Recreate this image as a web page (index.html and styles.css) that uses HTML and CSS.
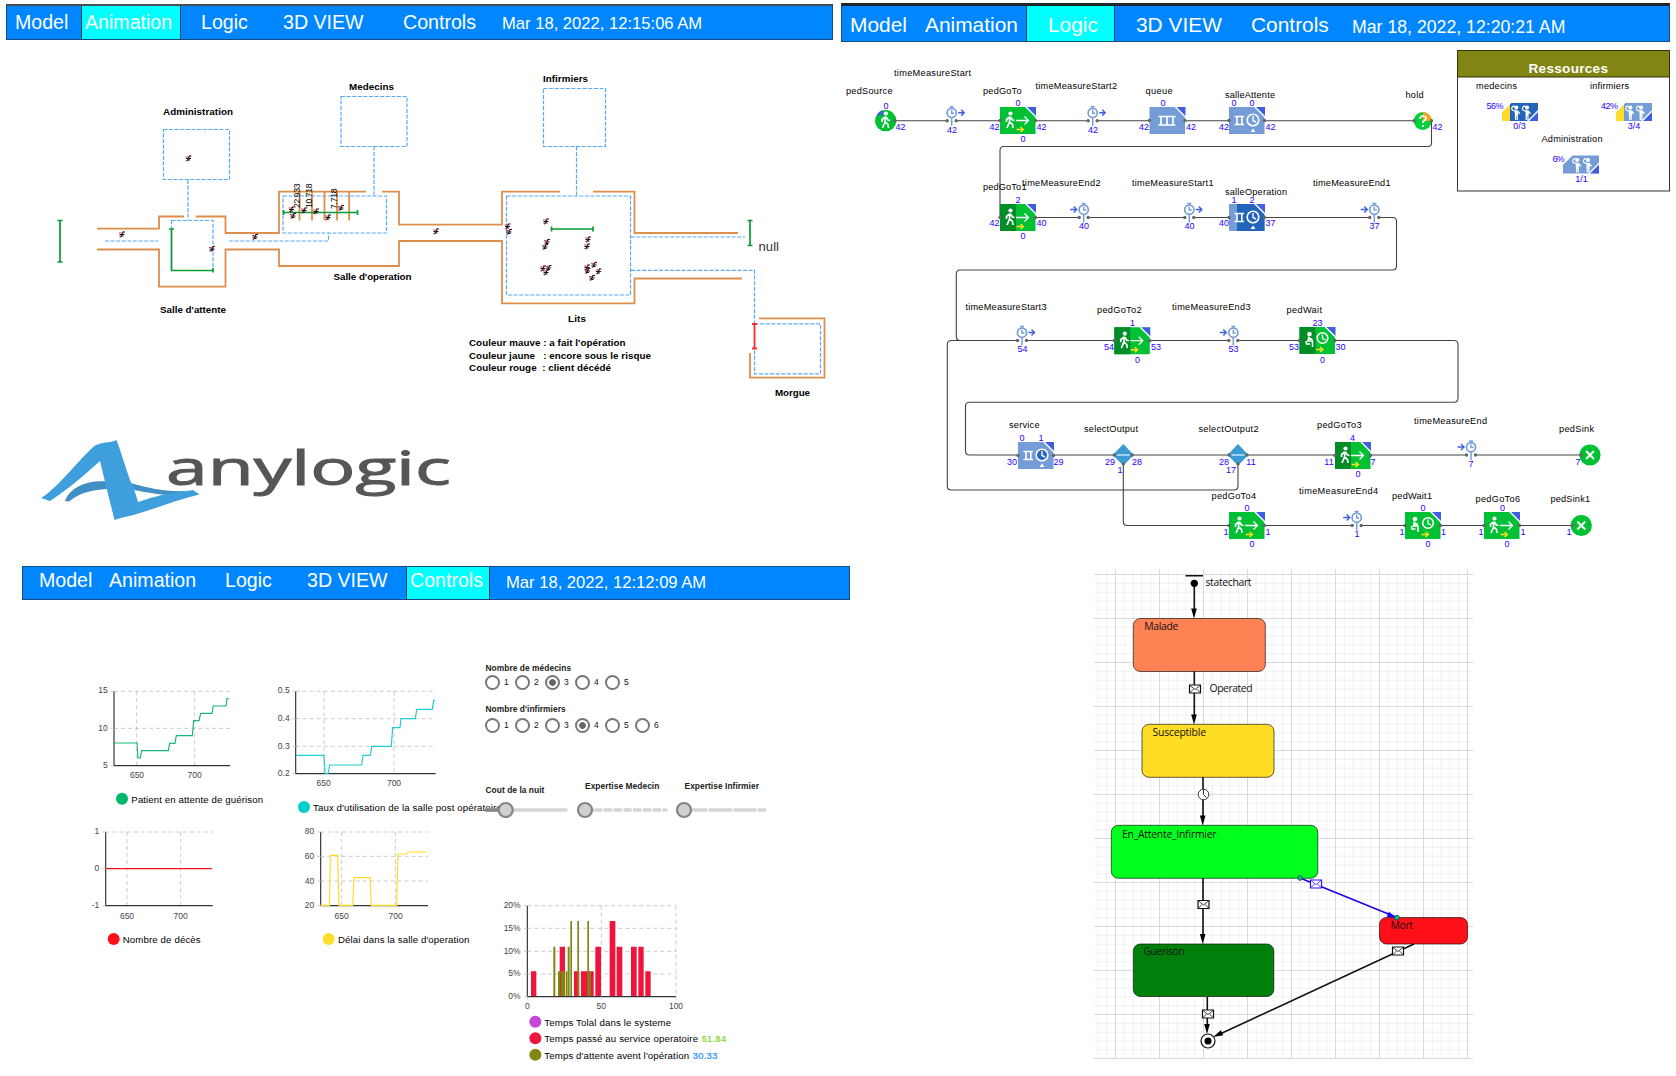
FILE: index.html
```html
<!DOCTYPE html>
<html lang="fr">
<head>
<meta charset="utf-8">
<title>Simulation hôpital</title>
<link rel="stylesheet" href="styles.css">
</head>
<body>
<main class="board">

<section class="panel">
<nav class="nav nav-animation">
<a class="tab">Model</a><a class="tab active">Animation</a><a class="tab">Logic</a><a class="tab">3D VIEW</a><a class="tab">Controls</a><span class="date">Mar 18, 2022, 12:15:06 AM</span>
</nav>
<svg class="canvas" width="838" height="520" viewBox="0 40 838 520">
<defs>
<g id="ped"><path d="M-2.500 0H2.500M-1.500 2.500L0 0L1-2.500H3M-1 1.500h2.500" stroke="#201418" stroke-width="1.200" fill="none"/><path d="M-3-1.500h2.500L1.500-3M-2.500 1.500l1 1.500" stroke="#b02a30" stroke-width=".8" fill="none"/></g>
</defs>
<g class="zone">
<rect x="163.500" y="129.500" width="66" height="50"/><path d="M188 180V220"/><rect x="171.500" y="220.500" width="41.500" height="50"/>
<path d="M105 241H158M229 241H328.500V233"/><rect x="283" y="196" width="103.500" height="37"/>
<rect x="341" y="96.500" width="66" height="50"/><path d="M374 146.500V196"/>
<rect x="543.500" y="88.500" width="62" height="58"/><path d="M576.500 146.500V196"/><rect x="506.500" y="196" width="124" height="99"/>
<path d="M631 237H745M631 270.300H754.500V323.500"/><rect x="754.500" y="323.800" width="66" height="50"/>
</g>
<path class="wall" d="M97 228.700H159V216.500H184M196 216.500H225.500V233H279V191.700H366M382 191.700H399V224.700H502V191.700H560M593 191.700H634.500V233H738M97 249.500H159V286.700H225.500V249.500H279V266H399V241H502V303.300H634.500V278.500H742M759 318.300H824.500V377.700H750V353"/>
<path class="wall" d="M299.500 192V220.500M312 192V220.500M324.500 192V220.500M337 192V220.500M349.200 192V220.500"/>
<path class="target" d="M60 220.500V262M57.500 220.500h5M57.500 262h5M171.500 229V270.500H213M169 229h5M213 268v4.500M283.500 212.500H357.500M283.500 210v5M357.500 210v5M551.500 229H593M551.500 226.500v5M593 226.500v5M750 220.500V245.500M747.500 220.500h5M747.500 245.500h5"/>
<path class="exit" d="M754.500 324V348.500M752 324h5M752 348.500h5"/>
<g class="tiny"><text transform="translate(299.800 208) rotate(-90)" textLength="24.500">22.933</text><text transform="translate(312 208) rotate(-90)" textLength="24.500">10.718</text><text transform="translate(337 209) rotate(-90)" textLength="20.500">7.718</text></g>
<g>
<use href="#ped" x="122" y="234.500"/><use href="#ped" x="188.500" y="158.500"/><use href="#ped" x="255" y="237"/><use href="#ped" x="212" y="249"/><use href="#ped" x="436" y="231.500"/>
<use href="#ped" x="291.500" y="209.500"/><use href="#ped" x="293" y="216"/><use href="#ped" x="304" y="210.500"/><use href="#ped" x="316" y="211.500"/><use href="#ped" x="328" y="217.500"/><use href="#ped" x="341" y="208"/>
<use href="#ped" x="546" y="221.500"/><use href="#ped" x="547" y="242"/><use href="#ped" x="545" y="247"/><use href="#ped" x="543" y="268.500"/><use href="#ped" x="548.500" y="268"/><use href="#ped" x="546" y="272.500"/>
<use href="#ped" x="588" y="239.500"/><use href="#ped" x="587" y="246.500"/><use href="#ped" x="587" y="267.500"/><use href="#ped" x="594" y="265"/><use href="#ped" x="587.500" y="271"/><use href="#ped" x="598.500" y="271.500"/><use href="#ped" x="592" y="278"/><use href="#ped" x="507.500" y="226.500"/><use href="#ped" x="509" y="232"/>
</g>
<g class="place">
<text x="163" y="115.300" textLength="70">Administration</text><text x="349" y="90.300" textLength="45">Medecins</text><text x="543" y="82" textLength="45">Infirmiers</text>
<text x="333.500" y="280" textLength="78">Salle d'operation</text><text x="160" y="313.300" textLength="66">Salle d'attente</text><text x="568" y="321.700" textLength="18">Lits</text><text x="775" y="396" textLength="35">Morgue</text>
<text x="469" y="346" textLength="156.500">Couleur mauve : a fait l'opération</text><text x="469" y="358.700" textLength="182">Couleur jaune   : encore sous le risque</text><text x="469" y="371" textLength="142">Couleur rouge  : client décédé</text>
</g>
<text class="null" x="758.500" y="251" textLength="20.500">null</text>
<path d="M65 501C70 487 88 480 106 481.500L107 489C90 490 80 493 69 501.500ZM131 483C148 488 165 492 186 491L178 495C165 496 150 493 134 490Z" fill="#418fc4"/>
<path d="M41 498C58 488 80 458 95 445.500C102 442 110 443 116.500 440C121 452 125 466 130 480C134 488 136 495 138 502C155 496 170 493 184 491.500L193 490L199.500 494.500C180 499 160 507 140 513C131 516 123 517 114.500 520L106 486L100 461C88 472 70 488 50 501Z" fill="#3f9fdd"/>
<text class="brand" x="166" y="484.500" textLength="285" lengthAdjust="spacingAndGlyphs">anylogic</text>
</svg>
</section>

<section class="panel">
<nav class="nav nav-logic">
<a class="tab">Model</a><a class="tab">Animation</a><a class="tab active">Logic</a><a class="tab">3D VIEW</a><a class="tab">Controls</a><span class="date">Mar 18, 2022, 12:20:21 AM</span>
</nav>
<svg class="canvas" width="838" height="518" viewBox="838 42 838 518">
<defs>
<g id="corner"><path d="M25 0L36 11V0Z" fill="#fff"/><path d="M27 0H36V9Z" fill="#3f5fe0"/></g>
<g id="ports"><circle cx="0" cy="13.500" r="1.700"/><circle cx="35.500" cy="13.500" r="1.700"/></g>
<g id="walker"><circle cx="10.500" cy="6.500" r="2.100" fill="#fff"/><path d="M10 9.500L9.500 15L7 21M9.500 14.500L12.500 17.500L13 21M9.500 10L6.500 12.500V15M10.500 10L12.500 13L14.500 13.500" stroke="#fff" stroke-width="1.700" fill="none"/></g>
<g id="yarrow"><path d="M16.500 22.500H22M20.500 20l3 2.500l-3 2.500" stroke="#ffe020" stroke-width="1.400" fill="none"/></g>
<g id="goIcon"><use href="#walker"/><path d="M16 13.500H28.500M24.500 9.500l4 4-4 4" stroke="#fff" stroke-width="1.300" fill="none"/><use href="#yarrow"/><use href="#corner"/><use href="#ports" fill="#666"/></g>
<g id="goto"><path d="M0 0H35.500V27H0Z" fill="#00c033"/><use href="#goIcon"/></g>
<g id="gotoBusy"><path d="M0 0H35.500V27H0Z" fill="#00c033"/><path d="M0 0H16V27H0Z" fill="#008c26"/><use href="#goIcon"/></g>
<g id="waitIcon"><circle cx="10" cy="7" r="2.300" fill="#fff"/><path d="M9.500 9.500L8.500 14H13V20M9.500 11L13 12.500M6.500 14L7 17H10.500" stroke="#fff" stroke-width="1.600" fill="none"/><circle cx="23" cy="11" r="5.300" fill="none" stroke="#fff" stroke-width="1.600"/><path d="M23 7.500V11.500L26 13" stroke="#fff" stroke-width="1.300" fill="none"/><use href="#yarrow"/><use href="#corner"/><use href="#ports" fill="#666"/></g>
<g id="wait"><path d="M0 0H35.500V27H0Z" fill="#00c033"/><use href="#waitIcon"/></g>
<g id="waitBusy"><path d="M0 0H35.500V27H0Z" fill="#00c033"/><path d="M0 0H16V27H0Z" fill="#008c26"/><use href="#waitIcon"/></g>
<g id="svcIcon"><path d="M5.500 9.500H15M5.500 17.500H15M8 9.500V17.500M12.800 9.500V17.500" stroke="#fff" stroke-width="1.600"/><circle cx="24" cy="13" r="5.800" stroke="#fff" stroke-width="1.600"/><path d="M24 9V13.500L27 15" stroke="#fff" stroke-width="1.400" fill="none"/><path d="M21.500 25l2.500-3.500l2.500 3.500Z" fill="#fff"/><use href="#corner"/><use href="#ports" fill="#666"/></g>
<g id="watch"><circle cy="-7.800" r="4.600" fill="#fff" stroke="#769fd9" stroke-width="1.700"/><path d="M-2-14H2M0-13V-11.500M0-3V5M0-10.500V-7.500H2.500" stroke="#769fd9" stroke-width="1.500" fill="none"/><circle cx="-4.500" r="1.700" fill="#666"/><circle cx="4.500" r="1.700" fill="#666"/></g>
<g id="start"><path d="M-4-1H4V1H-4Z" fill="#fff"/><use href="#watch"/><path d="M6.500-8H12.500M9.500-11l3 3-3 3" stroke="#3f5fe0" stroke-width="1.400" fill="none"/></g>
<g id="end"><path d="M-4-1H4V1H-4Z" fill="#fff"/><use href="#watch"/><path d="M-13.500-8H-7M-10-11l3 3-3 3" stroke="#3f5fe0" stroke-width="1.400" fill="none"/></g>
<g id="select"><path d="M0-11L10.500 0L0 10.500L-10.500 0Z" fill="#3b9ad2"/><path d="M-6.500 0H6.500" stroke="#d5f0ff" stroke-width="1.300"/><g fill="#666"><circle cx="-9" r="1.700"/><circle cx="9" r="1.700"/><circle cy="9" r="1.700"/></g></g>
<g id="sink"><circle r="10.600" fill="#00c033"/><path d="M-4-4L4 4M4-4L-4 4" stroke="#fff" stroke-width="1.900"/><circle cx="-9" r="1.700" fill="#666"/></g>
<g id="member"><circle cx="14.300" cy="4.600" r="2.100" fill="#fff"/><path d="M12.500 2.800Q9.200 3.500 9.800 6.300Q10.500 8.300 14.500 7.800" stroke="#fff" stroke-width="1.200" fill="none"/><path d="M12.700 7.500H16L18.300 10.500L17.500 11.300L15.900 10V17H14.700V13H14.200V17H13Z" fill="#fff"/></g>
<g id="crew"><path d="M9 0L0 9" stroke="#fff" stroke-width="1"/><path d="M36 7V18H25Z" fill="#fff"/><path d="M36 9V18H27Z" fill="#3f5fe0"/><use href="#member"/><use href="#member" x="10.700"/></g>
</defs>
<path class="wire" d="M895 120.700H1422M1431.500 121V143q0 3.500-3.500 3.500H1004q-4 0-4 4V217.500H1393q3.500 0 3.500 4V266q0 4-4 4H960q-3.700 0-3.700 4V336.500q0 4 4 4H1454q4 0 4 4V398.300q0 4-4 4H969.500q-4 0-4 4V451q0 4 4 4H1582M1123.300 465V521.500q0 4 4 4H1573M1238 465V486q0 4-4 4H951.300q-4 0-4-4V344.500q0-4 4-4H1018"/>
<g><circle cx="885.700" cy="120.700" r="10.600" fill="#00c033"/><path d="M876.500 115.500q2-4 6-5.500v5.500Z" fill="#3f5fe0"/><use href="#walker" x="875.500" y="107"/><circle cx="895" cy="120.700" r="1.700" fill="#666"/></g>
<use href="#start" x="951.700" y="120.700"/><use href="#goto" x="1000" y="107"/><use href="#start" x="1092.700" y="120.700"/>
<g transform="translate(1149.500 107)"><path d="M0 0H35.500V27H0Z" fill="#749dd8"/><path d="M9 9.500H26M9 18H26M11.500 9.500V18M17.500 9.500V18M23.500 9.500V18" stroke="#fff" stroke-width="1.700"/><use href="#corner"/><use href="#ports" fill="#666"/></g>
<g transform="translate(1229 107)"><path d="M0 0H35.500V27H0Z" fill="#749dd8"/><use href="#svcIcon" fill="none"/></g>
<g><circle cx="1422.700" cy="121" r="9" fill="#00d03a"/><path d="M1422.700 121V112A9 9 0 0 1 1431.700 121Z" fill="#f5a623"/><path d="M1420 119q0-3 3-3t3 2.500q0 1.500-3 3V123M1423 125v2" stroke="#fff" stroke-width="1.700" fill="none"/><circle cx="1414" cy="120.700" r="1.700" fill="#666"/><circle cx="1431.500" cy="120.700" r="1.700" fill="#666"/></g>
<use href="#gotoBusy" x="1000" y="204"/><use href="#end" x="1083.700" y="217.500"/><use href="#start" x="1189.300" y="217.500"/>
<g transform="translate(1229 204)"><path d="M0 0H35.500V27H0Z" fill="#749dd8"/><path d="M8 0H35.500V27H8Z" fill="#2365ba"/><use href="#svcIcon" fill="none"/></g>
<use href="#end" x="1374.300" y="217.500"/>
<use href="#start" x="1022" y="340.500"/><use href="#gotoBusy" x="1114.300" y="327.200"/><use href="#end" x="1233.300" y="340.500"/><use href="#waitBusy" x="1299.500" y="327"/>
<g transform="translate(1018 442)"><path d="M0 0H35.500V27H0Z" fill="#749dd8"/><use href="#svcIcon" fill="#2365ba"/></g>
<use href="#select" x="1123.300" y="455"/><use href="#select" x="1238" y="455"/><use href="#gotoBusy" x="1335" y="442"/><use href="#end" x="1471" y="455"/><use href="#sink" x="1590" y="455"/>
<use href="#goto" x="1229" y="512"/><use href="#end" x="1356.700" y="525.500"/><use href="#wait" x="1405" y="512"/><use href="#goto" x="1484" y="512"/><use href="#sink" x="1581.300" y="525.500"/>
<g class="label">
<text x="894" y="76" textLength="77">timeMeasureStart</text><text x="846" y="93.700" textLength="46.500">pedSource</text><text x="983" y="93.700" textLength="38.500">pedGoTo</text><text x="1035.500" y="89" textLength="81.500">timeMeasureStart2</text><text x="1145.500" y="93.700" textLength="27">queue</text><text x="1225" y="98" textLength="50">salleAttente</text><text x="1405.500" y="98" textLength="18">hold</text>
<text x="983" y="190" textLength="43.500">pedGoTo1</text><text x="1022" y="186.300" textLength="78.500">timeMeasureEnd2</text><text x="1132" y="186.300" textLength="81.500">timeMeasureStart1</text><text x="1225" y="195" textLength="62">salleOperation</text><text x="1313" y="186.300" textLength="77.500">timeMeasureEnd1</text>
<text x="965.500" y="309.700" textLength="81">timeMeasureStart3</text><text x="1097" y="313" textLength="44.500">pedGoTo2</text><text x="1172" y="309.700" textLength="78.500">timeMeasureEnd3</text><text x="1286.500" y="313" textLength="35.500">pedWait</text>
<text x="1009" y="428" textLength="30.500">service</text><text x="1084" y="432" textLength="54">selectOutput</text><text x="1198.500" y="432" textLength="60">selectOutput2</text><text x="1317" y="428" textLength="44.500">pedGoTo3</text><text x="1414" y="423.700" textLength="73">timeMeasureEnd</text><text x="1559" y="432" textLength="35">pedSink</text>
<text x="1211.500" y="499" textLength="44.500">pedGoTo4</text><text x="1299" y="494" textLength="79">timeMeasureEnd4</text><text x="1392" y="499" textLength="40">pedWait1</text><text x="1475.500" y="502.300" textLength="44.500">pedGoTo6</text><text x="1550.500" y="502.300" textLength="39.500">pedSink1</text>
</g>
<g class="count">
<text x="886" y="108.700">0</text><text x="900.500" y="130">42</text><text x="952" y="132.700">42</text><text x="994.500" y="130">42</text><text x="1018" y="106">0</text><text x="1041.500" y="130">42</text><text x="1023" y="142">0</text><text x="1093" y="132.700">42</text><text x="1144" y="130">42</text><text x="1163" y="106">0</text><text x="1191" y="130">42</text><text x="1224" y="130">42</text><text x="1234" y="106">0</text><text x="1252" y="106">0</text><text x="1270.500" y="130">42</text><text x="1437.500" y="130">42</text>
<text x="994.500" y="226">42</text><text x="1018" y="203">2</text><text x="1041.500" y="226">40</text><text x="1023" y="239">0</text><text x="1084" y="229">40</text><text x="1189.500" y="229">40</text><text x="1224" y="226">40</text><text x="1234" y="203">1</text><text x="1252" y="203">2</text><text x="1270.500" y="226">37</text><text x="1374.500" y="229">37</text>
<text x="1022.500" y="352">54</text><text x="1109" y="350">54</text><text x="1132.500" y="326">1</text><text x="1156" y="350">53</text><text x="1137.500" y="362.500">0</text><text x="1233.500" y="352">53</text><text x="1294" y="350">53</text><text x="1317.500" y="326">23</text><text x="1340.500" y="350">30</text><text x="1322.500" y="362.500">0</text>
<text x="1012" y="464.500">30</text><text x="1022" y="440.500">0</text><text x="1041" y="440.500">1</text><text x="1058.500" y="464.500">29</text><text x="1110" y="464.500">29</text><text x="1137" y="464.500">28</text><text x="1120" y="473">1</text><text x="1224" y="464.500">28</text><text x="1231" y="473">17</text><text x="1251" y="464.500">11</text><text x="1329" y="464.500">11</text><text x="1352.500" y="440.500">4</text><text x="1373" y="464.500">7</text><text x="1358" y="477">0</text><text x="1471" y="467">7</text><text x="1578" y="464.500">7</text>
<text x="1226" y="535">1</text><text x="1247" y="511">0</text><text x="1268" y="535">1</text><text x="1252" y="547">0</text><text x="1357" y="537">1</text><text x="1402" y="535">1</text><text x="1423" y="511">0</text><text x="1443.500" y="535">1</text><text x="1428" y="547">0</text><text x="1481" y="535">1</text><text x="1502.500" y="511">0</text><text x="1523" y="535">1</text><text x="1507" y="547">0</text><text x="1569" y="535">1</text>
</g>
<rect x="1457.500" y="50.500" width="212" height="140.500" fill="#fff" stroke="#333"/><rect x="1457.500" y="50.500" width="212" height="26.500" fill="#808611" stroke="#333311"/>
<text class="heading" x="1528.500" y="73" textLength="79.500">Ressources</text>
<g transform="translate(1502 103)"><path d="M9 0H36V18H0V9Z" fill="#2365ba"/><path d="M8 1V18H0V9Z" fill="#ffdc28"/><use href="#crew"/></g>
<g transform="translate(1616 103)"><path d="M9 0H36V18H0V9Z" fill="#749dd8"/><path d="M8 1V18H0V9Z" fill="#ffdc28"/><use href="#crew"/></g>
<g transform="translate(1563 155.500)"><path d="M9 0H36V18H0V9Z" fill="#749dd8"/><use href="#crew"/></g>
<g class="label"><text x="1476" y="89" textLength="41">medecins</text><text x="1590" y="89" textLength="39">infirmiers</text><text x="1541.500" y="142" textLength="61">Administration</text></g>
<g class="count"><text x="1495" y="109" textLength="17">56%</text><text x="1609.500" y="109" textLength="17">42%</text><text x="1558.500" y="162" textLength="12">6%</text><text x="1519.500" y="129">0/3</text><text x="1634" y="129">3/4</text><text x="1581.500" y="182">1/1</text></g>
</svg>
</section>

<section class="panel">
<nav class="nav nav-controls">
<a class="tab">Model</a><a class="tab">Animation</a><a class="tab">Logic</a><a class="tab">3D VIEW</a><a class="tab active">Controls</a><span class="date">Mar 18, 2022, 12:12:09 AM</span>
</nav>
<div class="dash">
<svg class="charts" width="460" height="475" viewBox="0 153 1380 1425">
<g>
<path class="grid" d="M342 421H690M342 532H690M410 421V644M584 421V644"/><path class="axis" d="M342 421V644H690"/><path class="tick" d="M332 421h10M332 532h10M332 644h10"/>
<path class="series" stroke="#16b777" d="M342 576H411L414 621H421L425 599H505L509 577H525L529 554H577L581 509H597L602 487H636L640 465H678L681 443H686"/>
<g class="num"><g text-anchor="end"><text x="323" y="427">15</text><text x="323" y="540">10</text><text x="323" y="651">5</text></g><g text-anchor="middle"><text x="411" y="680">650</text><text x="584" y="680">700</text></g></g>
<circle cx="366" cy="743" r="18" fill="#00b56c"/><text class="key" x="394" y="755" textLength="395">Patient en attente de guérison</text>
</g>
<g>
<path class="grid" d="M887 421H1307M887 503H1307M887 586H1307M972 421V668M1182 421V668"/><path class="axis" d="M887 421V668H1307"/><path class="tick" d="M877 421h10M877 503h10M877 586h10M877 668h10"/>
<path class="series" stroke="#1dd0cf" d="M887 613H972L975 667H985L989 642H1085L1089 613H1111L1115 586H1174L1178 530H1200L1203 503H1246L1250 475H1297L1301 448H1305"/>
<g class="num"><g text-anchor="end"><text x="869" y="427">0.5</text><text x="869" y="511">0.4</text><text x="869" y="594">0.3</text><text x="869" y="676">0.2</text></g><g text-anchor="middle"><text x="971" y="706">650</text><text x="1182" y="706">700</text></g></g>
<circle cx="912" cy="768" r="18" fill="#00d0cc"/><text class="key" x="939" y="780" textLength="566">Taux d'utilisation de la salle post opératoire</text>
</g>
<g>
<path class="grid" d="M317 843H638M381 843V1064M542 843V1064"/><path class="axis" d="M317 843V1064H638"/><path class="tick" d="M307 843h10M307 953h10M307 1064h10"/>
<path class="series" stroke="#ff1018" d="M317 953H636"/>
<g class="num"><g text-anchor="end"><text x="298" y="850">1</text><text x="298" y="960">0</text><text x="298" y="1071">-1</text></g><g text-anchor="middle"><text x="381" y="1103">650</text><text x="542" y="1103">700</text></g></g>
<circle cx="341" cy="1164" r="18" fill="#ff1018"/><text class="key" x="368" y="1176" textLength="234">Nombre de décès</text>
</g>
<g>
<path class="grid" d="M962 843H1284M962 916H1284M962 990H1284M1025 843V1064M1186 843V1064"/><path class="axis" d="M962 843V1064H1284"/><path class="tick" d="M952 843h10M952 916h10M952 990h10M952 1064h10"/>
<path class="series" stroke="#ffdc20" d="M962 1063H988L991 913H1013L1017 1063H1058L1062 980H1110L1114 1063H1190L1194 909H1219L1224 903H1281"/>
<g class="num"><g text-anchor="end"><text x="943" y="850">80</text><text x="943" y="924">60</text><text x="943" y="998">40</text><text x="943" y="1071">20</text></g><g text-anchor="middle"><text x="1025" y="1103">650</text><text x="1187" y="1103">700</text></g></g>
<circle cx="986" cy="1164" r="18" fill="#ffdc28"/><text class="key" x="1014" y="1176" textLength="394">Délai dans la salle d'operation</text>
</g>
</svg>
<div class="side">
<div class="settings">
<div class="caption">Nombre de médecins</div>
<div class="radios"><label><i></i>1</label><label><i></i>2</label><label><i class="on"></i>3</label><label><i></i>4</label><label><i></i>5</label></div>
<div class="caption second">Nombre d'infirmiers</div>
<div class="radios low"><label><i></i>1</label><label><i></i>2</label><label><i></i>3</label><label><i class="on"></i>4</label><label><i></i>5</label><label><i></i>6</label></div>
<div class="sliders">
<div class="slider"><div class="caption drop">Cout de la nuit</div><svg width="99" height="18" viewBox="0 0 99 18"><path class="track" d="M1.500 9H81"/><path class="track filled" d="M1.500 9H20"/><circle class="knob" cx="20.700" cy="9" r="7"/></svg></div>
<div class="slider"><div class="caption">Expertise Medecin</div><svg width="99" height="18" viewBox="0 0 99 18"><path class="track" d="M1.500 9H81"/><path class="gaps" d="M17 9h1.500M27 9h1.500M37 9h1.500M46.500 9h1.500M56.500 9h1.500M66 9h1.500M76 9h1.500"/><circle class="knob" cx="0" cy="9" r="7"/></svg></div>
<div class="slider"><div class="caption">Expertise Infirmier</div><svg width="99" height="18" viewBox="0 0 99 18"><path class="track" d="M1.500 9H81"/><path class="gaps" d="M23.500 9h1.500M48 9h1.500M72.500 9h1.500"/><circle class="knob" cx="0" cy="9" r="7"/></svg></div>
</div>
</div>
<svg class="hist" width="330" height="206" viewBox="0 0 990 618">
<path class="grid" d="M202 104H648M202 172H648M202 241H648M202 309H648M424 104V376M648 104V376"/>
<path fill="#f0143c" d="M213 301h16v76h-16ZM299 227h16v150h-16ZM342 301h16v76h-16ZM363 301h38v76h-38ZM406 227h17v150h-17ZM449 150h17v227h-17ZM470 227h17v150h-17ZM513 227h17v150h-17ZM535 227h16v150h-16ZM556 301h16v76h-16Z"/>
<path fill="#808611" d="M280 227h6v150h-6ZM294 301h6v76h-6ZM302 301h13v76h-13ZM317 301h5v76h-5ZM323 227h6v150h-6ZM331 150h5v227h-5ZM352 150h5v227h-5ZM382 150h5v227h-5ZM388 301h5v76h-5Z"/>
<path class="axis" d="M202 104V377H648"/><path class="tick" d="M192 104h10M192 172h10M192 241h10M192 309h10M192 377h10M202 377v9M424 377v9M648 377v9"/>
<g class="num"><g text-anchor="end"><text x="182" y="111">20%</text><text x="182" y="180">15%</text><text x="182" y="248">10%</text><text x="182" y="316">5%</text><text x="182" y="385">0%</text></g><g text-anchor="middle"><text x="202" y="414">0</text><text x="424" y="414">50</text><text x="648" y="414">100</text></g></g>
<circle cx="226" cy="452" r="18" fill="#c846d6"/><circle cx="226" cy="502" r="18" fill="#f0143c"/><circle cx="226" cy="551" r="18" fill="#808611"/>
<g class="key"><text x="253" y="464" textLength="380">Temps Tolal dans le systeme</text><text x="253" y="513" textLength="461">Temps passé au service operatoire</text><text x="253" y="563" textLength="434">Temps d'attente avent l'opération</text></g>
<text class="key strong" fill="#92d840" x="725" y="513" textLength="73">51.84</text><text class="key medium" fill="#1a90f5" x="698" y="563" textLength="74">30.33</text>
</svg>
</div>
</div>
</section>

<section class="panel chartpanel">
<svg class="statechart" width="379" height="491" viewBox="1094 569 379 491">
<defs>
<pattern id="mesh" x="1115" y="574" width="44" height="44" patternUnits="userSpaceOnUse"><path d="M9.300 0V44M18.100 0V44M26.900 0V44M35.700 0V44M0 9.300H44M0 18.100H44M0 26.900H44M0 35.700H44" stroke="#f0f0f0" stroke-width="1"/><path d="M.5 0V44M0 .5H44" stroke="#d9d9d9" stroke-width="1"/></pattern>
<g id="mail"><path d="M-5.500-4H5.500V4H-5.500Z" fill="#fff" stroke-width="1.200"/><path d="M-5-3.500L0 .5L5-3.500M-5 3.500L-1.500 0M5 3.500L1.500 0" fill="none" stroke-width=".8"/></g>
<path id="head" d="M-2.800-10H2.800L0 0Z"/>
</defs>
<rect x="1094" y="569" width="379" height="490" fill="url(#mesh)"/>
<g class="flow"><path d="M1185.500 575.700H1203M1194.300 583V612M1194.300 671V715M1203 777V816M1203 878V936M1207.300 997V1025M1414 944L1220 1034"/></g>
<circle cx="1194.300" cy="583.300" r="3.600"/>
<use href="#head" x="1194" y="618.500"/><use href="#head" x="1194" y="724.500"/><use href="#head" x="1202.700" y="825.500"/><use href="#head" x="1202.700" y="944"/><use href="#head" x="1207" y="1034"/><use href="#head" transform="translate(1213 1037) rotate(65)"/>
<g class="state">
<rect x="1133.300" y="618.500" width="132" height="53" rx="7" fill="#ff8254"/><rect x="1142" y="724.300" width="132" height="53" rx="7" fill="#ffdc24"/><rect x="1111.300" y="825.300" width="206.500" height="53" rx="7" fill="#00ff1c"/><rect x="1133.300" y="944" width="140.500" height="52.500" rx="7" fill="#00800a"/><rect x="1379.500" y="917.500" width="88" height="26.500" rx="7" fill="#ff1018"/>
</g>
<path d="M1300 878L1397 917.500" stroke="#2000e8" stroke-width="1.600"/><use href="#head" transform="translate(1397 918) rotate(-68)" fill="#2000ff"/>
<circle cx="1300" cy="878" r="2.300" fill="#00e020" stroke="#1040b0"/><circle cx="1397" cy="917.700" r="2.300" fill="#00e020" stroke="#1040b0"/>
<g stroke="#111"><use href="#mail" x="1195" y="689"/><use href="#mail" x="1203.500" y="904.500"/><use href="#mail" x="1208" y="1014"/><use href="#mail" x="1398" y="951"/></g><use href="#mail" x="1316" y="884" stroke="#3010f0"/>
<circle cx="1203.500" cy="794.500" r="5.300" fill="#fff" stroke="#333"/><path d="M1203.500 790V794.500L1206.500 797.500" stroke="#333" fill="none"/>
<circle cx="1208" cy="1041" r="7" fill="#fff" stroke="#111" stroke-width="1.200"/><circle cx="1208" cy="1041" r="3.500"/>
<g class="statename"><text x="1205.500" y="586.300" textLength="46">statechart</text><text x="1209.500" y="691.500" textLength="43">Operated</text><text x="1144.300" y="630" textLength="34">Malade</text><text x="1152.500" y="735.500" textLength="53.500">Susceptible</text><text x="1122" y="837.500" textLength="94.500">En_Attente_Infirmier</text><text x="1143.500" y="955" textLength="41">Guerison</text><text x="1390.500" y="929" textLength="22.500">Mort</text></g>
</svg>
</section>

</main>
</body>
</html>
```
FILE: styles.css
```css
* { box-sizing: border-box; }
body { margin: 0; background: #fff; font-family: "Liberation Sans", Arial, sans-serif; color: #111; }
.board { display: grid; grid-template-columns: 838px 838px; grid-template-rows: 560px 516px; width: 1676px; height: 1076px; overflow: hidden; }
.panel { min-width: 0; }
svg { display: block; overflow: visible; }

/* Navigation bars */
.nav { display: flex; background: #0087ff; border: 1px solid #174b7c; color: #fff; white-space: nowrap; font-size: 19.6px; line-height: 22px; }
.tab { flex: none; }
.date { font-size: 16.6px; }
.active { background: #0ff; border: solid #063c4c; border-width: 0 1px; }
.nav-animation { margin: 4px 5px 0 6px; height: 36px; padding-left: 7px; border-top: 2px solid #4a5058; }
.nav-animation .tab { padding-top: 5px; }
.nav-animation .tab:nth-child(1) { width: 67px; padding-left: 1px; }
.nav-animation .tab:nth-child(2) { width: 100px; padding-left: 3px; }
.nav-animation .tab:nth-child(3) { width: 102px; padding-left: 20px; }
.nav-animation .tab:nth-child(4) { width: 120px; }
.nav-animation .tab:nth-child(5) { width: 99px; }
.nav-animation .date { padding-top: 7px; }

.nav-logic { margin: 3px 6px 0 3px; height: 39px; padding-left: 8px; font-size: 20.9px; border-top: 3px solid #20242c; }
.nav-logic .tab { padding-top: 8px; }
.nav-logic .tab:nth-child(1) { width: 75px; }
.nav-logic .tab:nth-child(2) { width: 101px; }
.nav-logic .tab:nth-child(3) { width: 89px; padding-left: 21px; }
.nav-logic .tab:nth-child(4) { width: 136px; padding-left: 21px; }
.nav-logic .tab:nth-child(5) { width: 101px; }
.nav-logic .date { font-size: 17.7px; padding-top: 10px; }

.nav-controls { margin: 6px 0 0 22px; width: 828px; height: 34px; padding-left: 16px; }
.nav-controls .tab { padding-top: 2px; }
.nav-controls .tab:nth-child(1) { width: 70px; }
.nav-controls .tab:nth-child(2) { width: 116px; }
.nav-controls .tab:nth-child(3) { width: 82px; }
.nav-controls .tab:nth-child(4) { width: 99px; }
.nav-controls .tab:nth-child(5) { width: 84px; padding-left: 3px; }
.nav-controls .date { padding: 5px 0 0 16px; }

/* Floor plan */
.canvas text { white-space: pre; }
.wall { fill: none; stroke: #dc8e4c; stroke-width: 1.8; }
.zone { fill: none; stroke: #55a9fb; stroke-width: 1.2; stroke-dasharray: 4 1.6; }
.target { fill: none; stroke: #0a9a36; stroke-width: 1.7; }
.exit { fill: none; stroke: #ff2a34; stroke-width: 1.8; }
.tiny { font-size: 8.6px; }
.place { font-size: 9.8px; font-weight: bold; }
.null { font-size: 13px; fill: #333; }
.brand { font: 47.5px "Open Sans", sans-serif; fill: #555659; stroke: #555659; stroke-width: 1; }

/* Process flowchart */
.wire { fill: none; stroke: #444; stroke-width: 1.1; }
.label { font-size: 9.2px; }
.count { font-size: 9px; fill: #2a00ff; text-anchor: middle; }
.heading { font-size: 13.6px; font-weight: bold; fill: #fff; }

/* Charts and controls */
.dash { display: flex; height: 475px; margin-top: 2px; }
.charts { flex: none; }
.grid { fill: none; stroke: #606060; stroke-opacity: .33; stroke-width: 3; stroke-dasharray: 12 9; }
.axis { fill: none; stroke: #333; stroke-width: 3.5; }
.tick { stroke: #ccc; stroke-width: 3; }
.series { fill: none; stroke-width: 3.5; }
.num { font-size: 25.5px; fill: #444; }
.key { font-size: 29px; }
.strong { font-weight: bold; font-size: 27px; }
.medium { stroke: #1a90f5; stroke-width: .7; font-size: 28px; }
.side { width: 378px; }
.settings { height: 269px; padding: 59px 0 0 25px; }
.caption { height: 13px; font-size: 8.4px; line-height: 14px; font-weight: bold; letter-spacing: .05px; text-indent: .5px; color: #222; white-space: nowrap; }
.radios { display: flex; height: 16px; }
.radios label { display: flex; align-items: center; width: 30px; gap: 4px; font-size: 8.5px; }
.radios i { width: 15px; height: 15px; border: 2px solid #777; border-radius: 50%; }
.radios .on { background: radial-gradient(circle, #666 0 3px, #fff 3.700px); }
.second { margin-top: 12px; }
.low { margin-top: 2px; }
.sliders { display: flex; height: 45px; margin-top: 46px; }
.slider { display: flex; flex-direction: column; justify-content: space-between; flex: none; width: 99.500px; height: 40px; }
.drop { position: relative; top: 4px; }
.track { stroke: #d5d5d5; stroke-width: 3.5; stroke-linecap: round; }
.filled { stroke: #858585; }
.gaps { stroke: #fff; stroke-width: 3.5; }
.knob { fill: #d0d0d0; stroke: #858585; stroke-width: 2.2; }

/* Statechart */
.chartpanel { padding: 9px 0 0 256px; }
.flow { fill: none; stroke: #111; stroke-width: 1.6; }
.state { stroke: #000; stroke-opacity: .6; stroke-width: 1; }
.statename { font: 10.4px "Open Sans", "Noto Sans", sans-serif; fill: #111; }
```
